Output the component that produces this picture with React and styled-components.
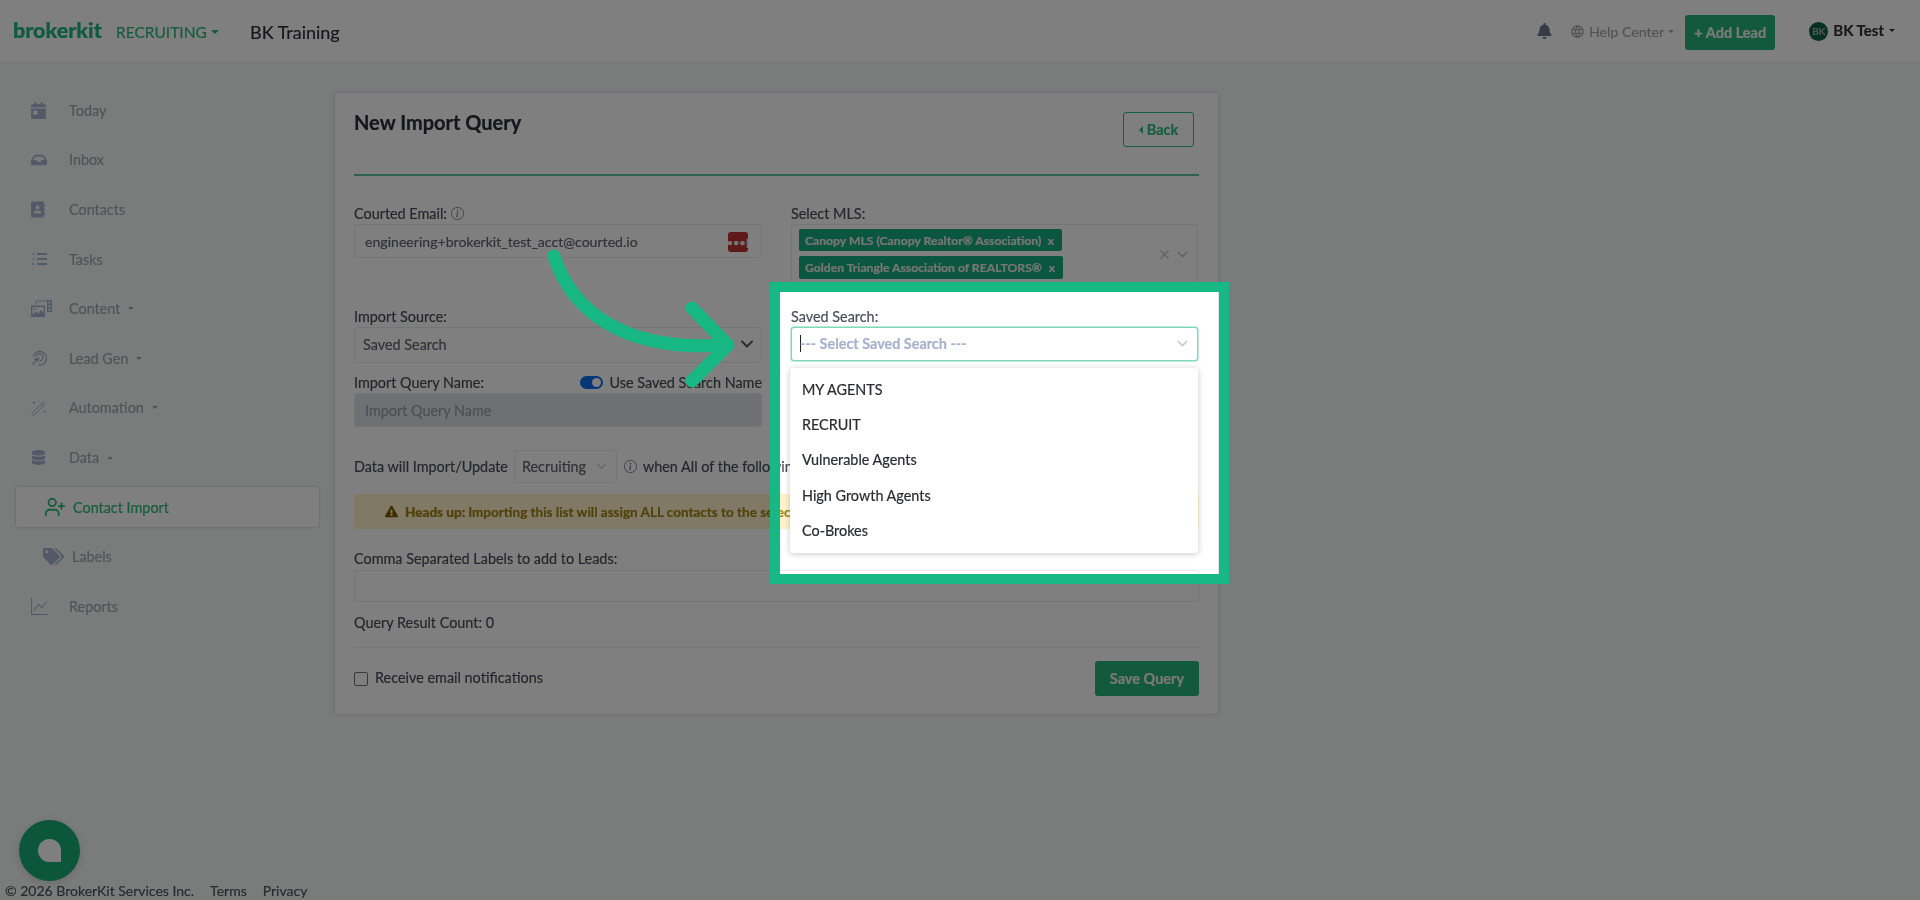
import styled, { createGlobalStyle } from "styled-components";
import {
  FaCalendarDay,
  FaInbox,
  FaAddressBook,
  FaDatabase,
  FaTags,
  FaBell,
  FaExclamationTriangle,
} from "react-icons/fa";
import { BsGraphUp, BsInfoCircle } from "react-icons/bs";
import { TbWorld } from "react-icons/tb";
import { LuChevronDown, LuUserPlus, LuX } from "react-icons/lu";

const GlobalStyle = createGlobalStyle`
  html, body {
    margin: 0;
    padding: 0;
    background: #f5f9f8;
  }
  * {
    box-sizing: border-box;
  }
`;

const Root = styled.div`
  position: relative;
  width: 1920px;
  height: 900px;
  overflow: hidden;
  display: flex;
  flex-direction: column;
  background: #f5f9f8;
  font-family: Lato, "Noto Sans", sans-serif;
  font-size: 14.4px;
  color: #4c4f5c;
  -webkit-text-stroke: 0.2px currentColor;
  filter: blur(0.35px);
`;

const Header = styled.header`
  height: 63px;
  flex: none;
  display: flex;
  align-items: center;
  padding: 0 25px 0 13px;
  background: #fff;
  border-bottom: 1px solid #f0f2f2;
`;

const Logo = styled.div`
  font-size: 21.5px;
  font-weight: 900;
  color: #1eb67e;
  margin-top: -3px;
  width: 103px;
`;

const AppSwitch = styled.div`
  display: flex;
  align-items: center;
  gap: 4px;
  color: #2fb880;
  font-size: 15.5px;
  width: 134px;
  margin-top: 1px;
`;

const Caret = styled.span`
  display: inline-block;
  width: 0;
  height: 0;
  border-left: ${(p) => p.$size || 3}px solid transparent;
  border-right: ${(p) => p.$size || 3}px solid transparent;
  ${(p) => (p.$up ? "border-bottom" : "border-top")}: ${(p) => p.$size || 3}px solid currentColor;
`;

const TeamName = styled.div`
  font-size: 18px;
  color: #2f3138;
  margin-top: 2px;
`;

const HeaderRight = styled.div`
  margin-left: auto;
  display: flex;
  align-items: center;
`;

const BellIcon = styled(FaBell)`
  width: 15px;
  height: 16px;
  color: #6f7690;
  margin-right: 18px;
`;

const HelpLink = styled.div`
  display: flex;
  align-items: center;
  gap: 4px;
  color: #a6a8ad;
  font-size: 14.2px;
  margin: 1px 11px 0 0;
`;

const AddLead = styled.button`
  width: 90px;
  height: 35px;
  border: 0;
  border-radius: 3px;
  background: #24b27d;
  color: #f2f2f2;
  font: 700 14.5px Lato, sans-serif;
  padding: 0;
  margin: 2px 34px 0 0;
`;

const Avatar = styled.span`
  width: 19px;
  height: 19px;
  border-radius: 50%;
  background: #0a6045;
  color: #c0c0c0;
  font-size: 10px;
  display: flex;
  align-items: center;
  justify-content: center;
  margin-right: 5px;
`;

const UserName = styled.div`
  display: flex;
  align-items: center;
  gap: 5px;
  font-weight: 700;
  font-size: 15px;
  color: #30323a;
  margin-top: -2px;
`;

const Body = styled.div`
  flex: 1;
  display: flex;
  min-height: 0;
`;

const Sidebar = styled.nav`
  width: 335px;
  flex: none;
  padding: 22.5px 16px 0;
`;

const NavItem = styled.div`
  height: 49.6px;
  display: flex;
  align-items: center;
  padding-left: ${(p) => (p.$sub ? 27 : 15)}px;
  color: #a3a7b6;
  & > svg {
    flex: none;
    color: #a9b3d0;
    width: ${(p) => p.$iconSize || 16}px;
    height: ${(p) => p.$iconHeight || p.$iconSize || 16}px;
    margin-right: ${(p) => (p.$sub ? 29 : 38) - (p.$iconSize || 16)}px;
  }
`;

const ActiveItem = styled.div`
  height: 49.6px;
  display: flex;
  align-items: center;
`;

const NavCaret = styled(Caret)`
  margin-left: 8px;
`;

const ActiveBox = styled.div`
  width: 100%;
  height: 40px;
  display: flex;
  align-items: center;
  padding-left: 28px;
  background: #fff;
  border-radius: 3px;
  box-shadow: 0 0 3px rgba(0, 0, 0, 0.25);
  color: #2fb880;
  & > svg {
    width: 22px;
    height: 22px;
    margin-right: 7px;
  }
`;

const Main = styled.main`
  flex: 1;
  padding-top: 30px;
`;

const Card = styled.section`
  width: 883px;
  height: 621px;
  background: #fff;
  border-radius: 3px;
  box-shadow: 0 0 4px rgba(80, 90, 120, 0.3);
  padding: 19px 19px 0;
`;

const CardHead = styled.div`
  height: 64px;
  display: flex;
  justify-content: space-between;
  align-items: flex-start;
  border-bottom: 2px solid #5fc79b;
`;

const CardTitle = styled.h2`
  margin: -2px 0 0;
  font-size: 20px;
  line-height: 24px;
  font-weight: 700;
  color: #2a2c38;
`;

const BackButton = styled.button`
  width: 71px;
  height: 35px;
  margin-right: 5px;
  display: flex;
  align-items: center;
  justify-content: center;
  gap: 4px;
  background: transparent;
  border: 1px solid #2ebc85;
  border-radius: 3px;
  color: #2ebc85;
  font: 700 14.5px Lato, sans-serif;
`;

const BackCaret = styled.span`
  width: 0;
  height: 0;
  border-top: 4px solid transparent;
  border-bottom: 4px solid transparent;
  border-right: 4px solid currentColor;
`;

const FormGrid = styled.div`
  margin-top: 29px;
  display: grid;
  grid-template-columns: 408px 407px;
  column-gap: 29px;
  row-gap: 18px;
`;

const Field = styled.div`
  position: relative;
  min-width: 0;
`;

const Label = styled.label`
  display: flex;
  align-items: center;
  gap: 4px;
  height: 16px;
  margin-bottom: 3px;
  color: #4c4f5c;
  white-space: nowrap;
`;

const SmallInfo = styled(BsInfoCircle)`
  width: 13px;
  height: 13px;
  color: #7b7e89;
`;

const TextBox = styled.div`
  height: ${(p) => p.$h || 34}px;
  display: flex;
  align-items: center;
  padding: ${(p) => (p.$lift ? "0" : "1px")} ${(p) => p.$padRight || 8}px ${(p) => p.$lift || 0}px ${(p) => p.$pad || 10}px;
  background: ${(p) => p.$bg || "#fff"};
  border: 1px solid #e9ebef;
  border-radius: 3px;
  color: ${(p) => p.$color || "#646773"};
  font-size: ${(p) => p.$size || 14.4}px;
  white-space: nowrap;
`;

const VaultIcon = styled.span`
  margin-left: auto;
  margin-right: 5px;
  width: 20px;
  height: 20px;
  border-radius: 3px;
  background: #c03232;
  color: #eee;
  font-size: 10px;
  font-weight: 700;
  letter-spacing: 0.5px;
  display: flex;
  align-items: center;
  justify-content: center;
`;

const MlsBox = styled.div`
  height: 66px;
  position: relative;
  border: 1px solid #e9ebef;
  border-radius: 3px;
  padding: 4px 7px;
  display: flex;
  flex-direction: column;
  align-items: flex-start;
  gap: 5px;
`;

const Chip = styled.span`
  height: ${(p) => p.$h}px;
  width: ${(p) => p.$w}px;
  display: flex;
  align-items: center;
  justify-content: space-between;
  padding: 0 8px 0 6px;
  background: #16ad7c;
  border-radius: 2px;
  color: #ececec;
  font-size: 12.2px;
  font-weight: 700;
  white-space: nowrap;
`;

const BoxControls = styled.span`
  position: absolute;
  right: 6px;
  top: 21px;
  display: flex;
  align-items: center;
  gap: 2px;
  color: #c4c6cc;
`;

const Controls = styled.span`
  margin-left: auto;
  display: flex;
  align-items: center;
  gap: 2px;
  color: ${(p) => p.$color || "#55585f"};
`;

const NameRow = styled.div`
  display: flex;
  align-items: center;
  justify-content: space-between;
  margin-top: 11px;
  height: 16px;
  margin-bottom: 3px;
`;

const RowText = styled.span`
  display: flex;
  align-items: center;
  white-space: nowrap;
`;

const Toggle = styled.span`
  width: 23px;
  height: 13px;
  border-radius: 7px;
  background: #0a6cf0;
  display: flex;
  align-items: center;
  justify-content: flex-end;
  padding-right: 2px;
  margin-right: 7px;
  &::after {
    content: "";
    width: 9px;
    height: 9px;
    border-radius: 50%;
    background: #fff;
  }
`;

const SavedSelect = styled.div`
  height: 34px;
  display: flex;
  align-items: center;
  padding: 0 6px 2px 8px;
  background: #fff;
  border: 1px solid #7fd8b6;
  border-radius: 3px;
  box-shadow: 0 0 0 0.5px #7fd8b6;
  color: #a8b2ce;
  font-weight: 700;
`;

const TextCursor = styled.span`
  width: 1px;
  height: 17px;
  background: #222;
  margin-right: -1px;
`;

const Menu = styled.div`
  position: absolute;
  left: -1px;
  top: 60px;
  width: 408px;
  height: 185px;
  z-index: 2;
  padding: 4px 12px;
  background: #fff;
  border-radius: 3px;
  box-shadow: 0 1px 6px rgba(0, 0, 0, 0.22);
`;

const MenuItem = styled.div`
  height: 35.2px;
  display: flex;
  align-items: center;
  color: #2a2c34;
`;

const DataRow = styled.div`
  margin-top: 23px;
  height: 33px;
  display: flex;
  align-items: center;
  white-space: nowrap;
`;

const InlineSelect = styled.div`
  width: 103px;
  height: 33px;
  margin: 0 7px 0 6px;
  display: flex;
  align-items: center;
  padding: 0 7px;
  border: 1px solid #e9ebef;
  border-radius: 3px;
  color: #63666f;
`;

const RowInfo = styled(BsInfoCircle)`
  width: 13px;
  height: 13px;
  margin-right: 6px;
  color: #7b7e89;
`;

const Alert = styled.div`
  margin-top: 11px;
  height: 35px;
  display: flex;
  align-items: center;
  padding-left: 31px;
  background: #fff3cd;
  border-radius: 3px;
  color: #a08415;
  font-size: 13.5px;
  font-weight: 700;
  white-space: nowrap;
  & > svg {
    width: 13px;
    height: 13px;
    margin-right: 7px;
    color: #7a5d00;
  }
`;

const AlertLead = styled.span`
  color: #a08415;
  font-weight: 900;
  margin-right: 3px;
`;

const LabelsField = styled.div`
  margin-top: 21px;
  & > label {
    margin-bottom: 4px;
  }
`;

const ResultCount = styled.div`
  margin-top: 11px;
  height: 18px;
  display: flex;
  align-items: center;
  color: #4c4f5c;
`;

const CardFoot = styled.div`
  margin-top: 16px;
  padding-top: 13px;
  border-top: 1px dotted #d8dae0;
  display: flex;
  align-items: center;
  justify-content: space-between;
`;

const CheckRow = styled.div`
  display: flex;
  align-items: center;
  gap: 7px;
  margin-top: -2px;
`;

const CheckBox = styled.span`
  width: 14px;
  height: 14px;
  border: 1px solid #72747c;
  border-radius: 2px;
  background: #fff;
  margin-top: 3px;
`;

const SaveButton = styled.button`
  width: 104px;
  height: 35px;
  border: 0;
  border-radius: 3px;
  background: #24b27d;
  color: #f2f2f2;
  font: 700 14.5px Lato, sans-serif;
`;

const Footer = styled.footer`
  height: 19px;
  flex: none;
  display: flex;
  align-items: center;
  padding-left: 5px;
  gap: 16px;
  font-size: 14px;
  color: #51535e;
`;

const ChatBubble = styled.div`
  position: absolute;
  left: 19px;
  top: 820px;
  width: 61px;
  height: 61px;
  border-radius: 50%;
  background: #18ad78;
  display: flex;
  align-items: center;
  justify-content: center;
  box-shadow: 0 2px 10px rgba(0, 0, 0, 0.15);
  &::after {
    content: "";
    width: 23px;
    height: 23px;
    background: #fff;
    border-radius: 50% 50% 0 50%;
  }
`;

// the dim layer is the shadow of this frame, so the page shows through it undimmed
const Spotlight = styled.div`
  position: absolute;
  left: 770px;
  top: 282px;
  width: 459px;
  height: 302px;
  border: 10px solid #17b883;
  box-shadow: 0 0 0 2400px rgba(0, 0, 0, 0.5);
  z-index: 5;
`;

const Arrow = styled.svg`
  position: absolute;
  left: 540px;
  top: 245px;
  width: 200px;
  height: 150px;
  z-index: 6;
`;

const TasksIcon = () => (
  <svg viewBox="0 0 16 16" fill="none" stroke="currentColor">
    <path d="M6 3h10M6 8h10M6 13h10" strokeWidth="1.8" />
    <path d="M.5 2.5l1.2 1.2L3.8 1.3M.5 7.5l1.2 1.2 2.1-2.4" strokeWidth="1" />
    <circle cx="1.8" cy="13" r="1.1" fill="currentColor" stroke="none" />
  </svg>
);

const ContentIcon = () => (
  <svg viewBox="0 0 21 17" fill="currentColor">
    <path d="M0 5.5h14v11.5H0zM1.5 7v7.5l3.5-3 2.5 2 2.5-3.5 2.5 3V7z" fillRule="evenodd" />
    <circle cx="4" cy="9" r="1" />
    <path d="M5 4V1h11.5" fill="none" stroke="currentColor" strokeWidth="1" />
    <path d="M16 0h5v12h-5zM17.5 1.5v2h2v-2zM17.5 5v2h2V5zM17.5 8.5v2h2v-2z" fillRule="evenodd" />
  </svg>
);

const LeadGenIcon = () => (
  <svg viewBox="0 0 16 16" fill="none" stroke="currentColor" strokeWidth="1.3">
    <path d="M2.2 6.5A6.8 6.8 0 1 1 7.5 15" />
    <path d="M4.8 6.8A3.6 3.6 0 1 1 8.6 11" />
    <path d="M8.6 7.2L6.9 12 5.7 10.5 2.2 15.2 1 14l3.6-3.6-1.6-1.4z" fill="currentColor" stroke="none" />
  </svg>
);

const WandIcon = () => (
  <svg viewBox="0 0 16 16" fill="none" stroke="currentColor" strokeWidth="1">
    <path d="M1 13.2L11.6 2.6a1 1 0 0 1 1.4 0l.6.6a1 1 0 0 1 0 1.4L3 15.2a.8.8 0 0 1-1.1 0l-.9-.9a.8.8 0 0 1 0-1.1z" />
    <path d="M9.8 4.4l2 2" />
    <path d="M3 .5l.6 1.4L5 2.5l-1.4.6L3 4.5l-.6-1.4L1 2.5l1.4-.6zM13.5 10l.5 1 1 .5-1 .5-.5 1-.5-1-1-.5 1-.5zM7.5 .6l.3.7.7.3-.7.3-.3.7-.3-.7-.7-.3.7-.3z" fill="currentColor" stroke="none" />
  </svg>
);

const navTop = [
  { label: "Today", icon: <FaCalendarDay />, iconSize: 15, iconHeight: 17 },
  { label: "Inbox", icon: <FaInbox />, iconSize: 16 },
  { label: "Contacts", icon: <FaAddressBook />, iconSize: 14, iconHeight: 17 },
  { label: "Tasks", icon: <TasksIcon /> },
  { label: "Content", icon: <ContentIcon />, caret: true, iconSize: 21, iconHeight: 17 },
  { label: "Lead Gen", icon: <LeadGenIcon />, caret: true },
  { label: "Automation", icon: <WandIcon />, caret: true },
  { label: "Data", icon: <FaDatabase />, caret: "up", iconSize: 15 },
];

const searches = ["MY AGENTS", "RECRUIT", "Vulnerable Agents", "High Growth Agents", "Co-Brokes"];

export default function App() {
  return (
    <Root>
      <GlobalStyle />
      <Header>
        <Logo>brokerkit</Logo>
        <AppSwitch>
          RECRUITING <Caret $size={4} />
        </AppSwitch>
        <TeamName>BK Training</TeamName>
        <HeaderRight>
          <BellIcon />
          <HelpLink>
            <TbWorld size={15} /> Help Center <Caret />
          </HelpLink>
          <AddLead>+ Add Lead</AddLead>
          <Avatar>BK</Avatar>
          <UserName>
            BK Test <Caret />
          </UserName>
        </HeaderRight>
      </Header>

      <Body>
        <Sidebar>
          {navTop.map((item) => (
            <NavItem key={item.label} $iconSize={item.iconSize} $iconHeight={item.iconHeight}>
              {item.icon}
              {item.label}
              {item.caret && <NavCaret $up={item.caret === "up"} />}
            </NavItem>
          ))}
          <ActiveItem>
            <ActiveBox>
              <LuUserPlus />
              Contact Import
            </ActiveBox>
          </ActiveItem>
          <NavItem $sub $iconSize={21}>
            <FaTags />
            Labels
          </NavItem>
          <NavItem $iconSize={17}>
            <BsGraphUp />
            Reports
          </NavItem>
        </Sidebar>

        <Main>
          <Card>
            <CardHead>
              <CardTitle>New Import Query</CardTitle>
              <BackButton>
                <BackCaret /> Back
              </BackButton>
            </CardHead>

            <FormGrid>
              <Field>
                <Label>
                  Courted Email: <SmallInfo />
                </Label>
                <TextBox $size={14.1}>
                  engineering+brokerkit_test_acct@courted.io
                  <VaultIcon>•••|</VaultIcon>
                </TextBox>
              </Field>
              <Field>
                <Label>Select MLS:</Label>
                <MlsBox>
                  <Chip $w={263} $h={22}>
                    Canopy MLS (Canopy Realtor® Association) <span>x</span>
                  </Chip>
                  <Chip $w={264} $h={23}>
                    Golden Triangle Association of REALTORS® <span>x</span>
                  </Chip>
                  <BoxControls>
                    <LuX size={15} />
                    <LuChevronDown size={17} />
                  </BoxControls>
                </MlsBox>
              </Field>

              <Field>
                <Label>Import Source:</Label>
                <TextBox $h={36} $pad={8} $lift={2} $padRight={4}>
                  Saved Search
                  <Controls>
                    <LuX size={13} />
                    <LuChevronDown size={20} strokeWidth={2.4} />
                  </Controls>
                </TextBox>
                <NameRow>
                  <RowText>Import Query Name:</RowText>
                  <RowText>
                    <Toggle />
                    Use Saved Search Name
                  </RowText>
                </NameRow>
                <TextBox $bg="#dfe1e6" $color="#9b9ea8">
                  Import Query Name
                </TextBox>
              </Field>
              <Field>
                <Label>Saved Search:</Label>
                <SavedSelect>
                  <TextCursor />
                  --- Select Saved Search ---
                  <Controls $color="#c9ccd2">
                    <LuChevronDown size={17} />
                  </Controls>
                </SavedSelect>
                <Menu>
                  {searches.map((name) => (
                    <MenuItem key={name}>{name}</MenuItem>
                  ))}
                </Menu>
              </Field>
            </FormGrid>

            <DataRow>
              Data will Import/Update
              <InlineSelect>
                Recruiting
                <Controls $color="#c4c6cc">
                  <LuChevronDown size={15} />
                </Controls>
              </InlineSelect>
              <RowInfo />
              when All of the following criteria are met:
            </DataRow>

            <Alert>
              <FaExclamationTriangle />
              <AlertLead>Heads up:</AlertLead> Importing this list will assign ALL contacts to the selected agent.
            </Alert>

            <LabelsField>
              <Label>Comma Separated Labels to add to Leads:</Label>
              <TextBox $h={32} />
            </LabelsField>

            <ResultCount>Query Result Count: 0</ResultCount>

            <CardFoot>
              <CheckRow>
                <CheckBox />
                Receive email notifications
              </CheckRow>
              <SaveButton>Save Query</SaveButton>
            </CardFoot>
          </Card>
        </Main>
      </Body>

      <Footer>
        <span>© 2026 BrokerKit Services Inc.</span>
        <span>Terms</span>
        <span>Privacy</span>
      </Footer>

      <ChatBubble />
      <Spotlight />
      <Arrow viewBox="540 245 200 150" fill="none" stroke="#17b883" strokeWidth="13" strokeLinecap="round" strokeLinejoin="round">
        <path d="M554 256 C572 312 625 352 725 345" />
        <path d="M692 308 L728 345 L692 381" />
      </Arrow>
    </Root>
  );
}
